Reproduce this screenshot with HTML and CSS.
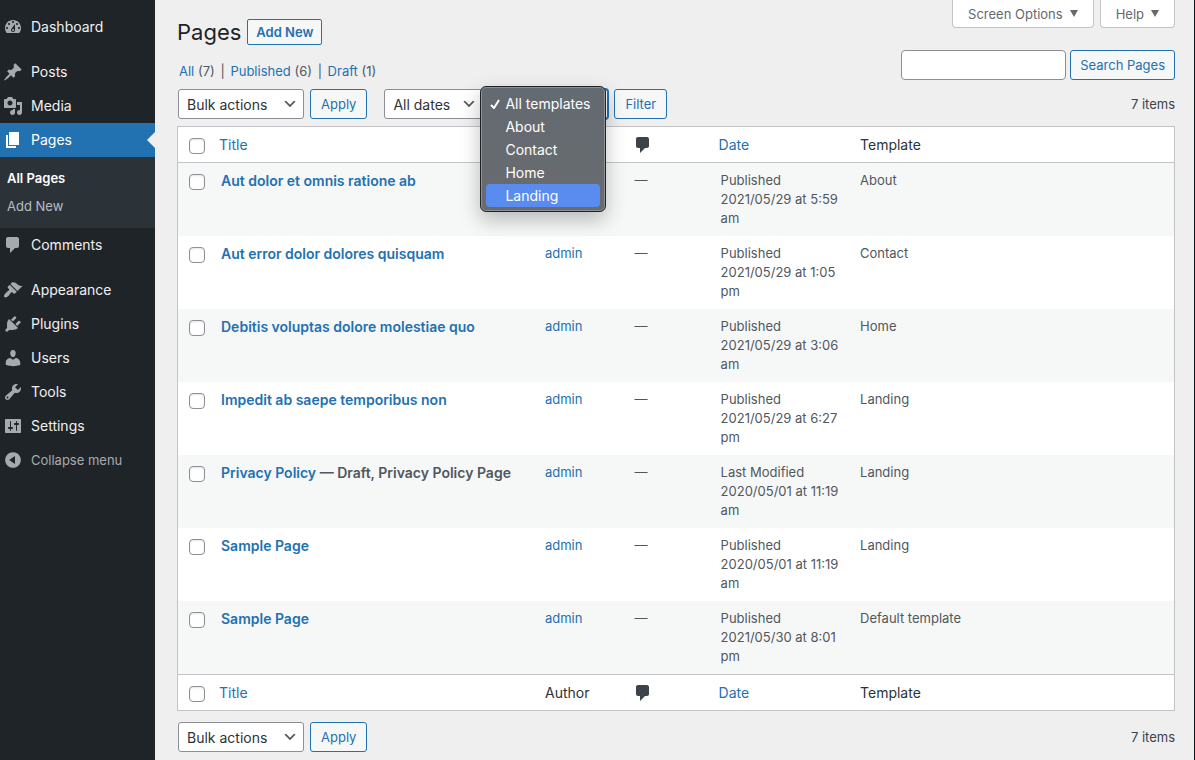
FILE: index.html
```html
<!DOCTYPE html>
<html lang="en">
<head>
  <meta charset="UTF-8" />
  <meta name="viewport" content="width=device-width, initial-scale=1.0"/>
  <title>Pages</title>
  <link rel="stylesheet" href="styles.css">
</head>
<body>
  <nav class="menu" aria-label="Main menu">
    <a class="menu-item" href="#">
      <svg viewBox="0 0 20 20"><path fill-rule="evenodd" d="M3.76 16h12.48c1.1-1.37 1.76-3.11 1.76-5 0-4.42-3.58-8-8-8s-8 3.58-8 8c0 1.89.66 3.63 1.76 5zM10 4c.55 0 1 .45 1 1s-.45 1-1 1-1-.45-1-1 .45-1 1-1zM6 6c.55 0 1 .45 1 1s-.45 1-1 1-1-.45-1-1 .45-1 1-1zm8 0c.55 0 1 .45 1 1s-.45 1-1 1-1-.45-1-1 .45-1 1-1zm-5.37 5.55L12 7v6c0 1.1-.9 2-2 2s-2-.9-2-2c0-.57.24-1.08.63-1.45zM4 10c.55 0 1 .45 1 1s-.45 1-1 1-1-.45-1-1 .45-1 1-1zm12 0c.55 0 1 .45 1 1s-.45 1-1 1-1-.45-1-1 .45-1 1-1zm-5 3c0-.55-.45-1-1-1s-1 .45-1 1 .45 1 1 1 1-.45 1-1z"/></svg>
      Dashboard
    </a>
    <a class="menu-item spaced" href="#">
      <svg viewBox="0 0 20 20"><path d="M10.44 3.02l1.82-1.82 6.36 6.35-1.83 1.82c-1.05-.68-2.48-.57-3.41.36l-.75.75c-.92.93-1.04 2.35-.35 3.41l-1.83 1.82-2.41-2.41-2.8 2.79c-.42.42-3.38 2.71-3.8 2.29s1.86-3.39 2.28-3.81l2.79-2.79L4.1 9.36l1.83-1.82c1.05.69 2.48.57 3.4-.36l.75-.75c.93-.92 1.05-2.35.36-3.41z"/></svg>
      Posts
    </a>
    <a class="menu-item" href="#">
      <svg viewBox="0 0 20 20"><path fill-rule="evenodd" d="M13 11V4c0-.55-.45-1-1-1h-1.67L9 1H5L3.67 3H2c-.55 0-1 .45-1 1v7c0 .55.45 1 1 1h10c.55 0 1-.45 1-1zM7 4.5c1.38 0 2.5 1.12 2.5 2.5S8.38 9.5 7 9.5 4.5 8.38 4.5 7 5.62 4.5 7 4.5zM14 6h5v10.5c0 1.38-1.12 2.5-2.5 2.5S14 17.88 14 16.5s1.12-2.5 2.5-2.5c.17 0 .34.02.5.05V9h-3V6zm-4 8.05V13h2v3.5c0 1.38-1.12 2.5-2.5 2.5S7 17.88 7 16.5 8.12 14 9.5 14c.17 0 .34.02.5.05z"/></svg>
      Media
    </a>
    <a class="menu-item current" href="#">
      <svg viewBox="0 0 20 20"><path d="M6 15V2h10v13H6zm-1 1h8v2H3V5h2v11z"/></svg>
      Pages
    </a>
    <div class="submenu">
      <a class="active" href="#">All Pages</a>
      <a href="#">Add New</a>
    </div>
    <a class="menu-item" href="#">
      <svg viewBox="0 0 20 20"><path d="M5 2h9c1.1 0 2 .9 2 2v7c0 1.1-.9 2-2 2h-2l-5 5v-5H5c-1.1 0-2-.9-2-2V4c0-1.1.9-2 2-2z"/></svg>
      Comments
    </a>
    <a class="menu-item spaced" href="#">
      <svg viewBox="0 0 20 20"><path d="M14.48 11.06L7.41 3.99l1.5-1.5c.5-.56 2.3-.47 3.51.32 1.21.8 1.43 1.28 2.91 2.1 1.18.64 2.45 1.26 4.45.85zm-.71.71L6.7 4.7 4.93 6.47c-.39.39-.39 1.02 0 1.41l1.06 1.06c.39.39.39 1.03 0 1.42-.6.6-1.43 1.11-2.21 1.69-.35.26-.7.53-1.01.84C1.43 14.23.4 16.08 1.4 17.07c.99 1 2.84-.03 4.18-1.36.31-.31.58-.66.85-1.02.57-.78 1.08-1.61 1.69-2.21.39-.39 1.02-.39 1.41 0l1.06 1.06c.39.39 1.02.39 1.41 0z"/></svg>
      Appearance
    </a>
    <a class="menu-item" href="#">
      <svg viewBox="0 0 20 20"><path d="M13.11 4.36L9.87 7.6 8 5.73l3.24-3.24c.35-.34 1.05-.2 1.56.32.52.51.66 1.21.31 1.55zm-8 1.77l.91-1.12 9.01 9.01-1.19.84c-.71.71-2.63 1.16-3.82 1.16H6.14L4.9 17.26c-.59.59-1.54.59-2.12 0-.59-.58-.59-1.53 0-2.12l1.24-1.24v-3.88c0-1.13.4-3.19 1.09-3.89zm7.26 3.97l3.24-3.24c.34-.35 1.04-.21 1.55.31.52.51.66 1.21.31 1.55l-3.24 3.25z"/></svg>
      Plugins
    </a>
    <a class="menu-item" href="#">
      <svg viewBox="0 0 20 20"><path d="M10 9.25c-2.27 0-2.73-3.44-2.73-3.44C7 4.02 7.82 2 9.97 2c2.16 0 2.98 2.02 2.71 3.81 0 0-.41 3.44-2.68 3.44zm0 2.57L12.72 10c2.39 0 4.52 2.33 4.52 4.53v2.49s-3.65 1.13-7.24 1.13c-3.65 0-7.24-1.13-7.24-1.13v-2.49c0-2.25 1.94-4.48 4.47-4.48z"/></svg>
      Users
    </a>
    <a class="menu-item" href="#">
      <svg viewBox="0 0 20 20"><path fill-rule="evenodd" d="M16.68 9.77c-1.34 1.34-3.3 1.67-4.95.99l-5.41 6.52c-.99.99-2.59.99-3.58 0s-.99-2.59 0-3.57l6.52-5.42c-.68-1.65-.35-3.61.99-4.95 1.28-1.28 3.12-1.62 4.72-1.06l-2.89 2.89 2.82 2.82 2.86-2.87c.53 1.58.18 3.39-1.08 4.65zM3.81 16.21c.4.39 1.04.39 1.43 0 .4-.4.4-1.04 0-1.43-.39-.4-1.03-.4-1.43 0-.39.39-.39 1.03 0 1.43z"/></svg>
      Tools
    </a>
    <a class="menu-item" href="#">
      <svg viewBox="0 0 20 20"><path fill-rule="evenodd" d="M18 16V4c0-.55-.45-1-1-1H3c-.55 0-1 .45-1 1v12c0 .55.45 1 1 1h14c.55 0 1-.45 1-1zM8 11h1c.55 0 1 .45 1 1s-.45 1-1 1H8v1.5c0 .28-.22.5-.5.5s-.5-.22-.5-.5V13H6c-.55 0-1-.45-1-1s.45-1 1-1h1V5.5c0-.28.22-.5.5-.5s.5.22.5.5V11zm5-2h-1c-.55 0-1-.45-1-1s.45-1 1-1h1V5.5c0-.28.22-.5.5-.5s.5.22.5.5V7h1c.55 0 1 .45 1 1s-.45 1-1 1h-1v5.5c0 .28-.22.5-.5.5s-.5-.22-.5-.5V9z"/></svg>
      Settings
    </a>
    <button class="menu-item collapse" type="button">
      <svg viewBox="0 0 20 20"><path fill-rule="evenodd" d="M10 2.16c4.33 0 7.84 3.51 7.84 7.84s-3.51 7.84-7.84 7.84S2.16 14.33 2.16 10 5.71 2.16 10 2.16zm2 11.72V6.12L6.18 9.97z"/></svg>
      Collapse menu
    </button>
  </nav>

  <main class="content">
    <header class="top">
      <div class="heading">
        <div class="title-row">
          <h1>Pages</h1>
          <a class="add-new" href="#">Add New</a>
        </div>
        <div class="views">
          <a href="#">All</a> (7)
          <span class="sep">|</span>
          <a href="#">Published</a> (6)
          <span class="sep">|</span>
          <a href="#">Draft</a> (1)
        </div>
      </div>
      <div class="top-right">
        <div class="screen-tabs">
          <button type="button">Screen Options <span class="arrow"></span></button>
          <button type="button">Help <span class="arrow"></span></button>
        </div>
        <div class="search">
          <input type="search" aria-label="Search Pages">
          <button class="button" type="button">Search Pages</button>
        </div>
      </div>
    </header>

    <div class="tablenav">
      <select class="bulk" aria-label="Select bulk action">
        <option>Bulk actions</option>
      </select>
      <button class="button" type="button">Apply</button>
      <select class="dates" aria-label="Filter by date">
        <option>All dates</option>
      </select>
      <div class="template-filter">
        <select class="templates" aria-label="Filter by template">
          <option>All templates</option>
          <option>About</option>
          <option>Contact</option>
          <option>Home</option>
          <option>Landing</option>
        </select>
        <ul class="dropdown" role="listbox" aria-label="Templates">
          <li role="option" aria-selected="true"><svg viewBox="0 0 10 10"><path d="M1 6l3 3 5-8"/></svg>All templates</li>
          <li role="option">About</li>
          <li role="option">Contact</li>
          <li role="option">Home</li>
          <li role="option" class="hover">Landing</li>
        </ul>
      </div>
      <button class="button" type="button">Filter</button>
      <span class="count">7 items</span>
    </div>

    <table class="pages">
      <colgroup>
        <col class="col-check"><col><col class="col-author"><col class="col-comments"><col class="col-date"><col>
      </colgroup>
      <thead>
        <tr>
          <td class="check"><input type="checkbox" aria-label="Select all"></td>
          <th class="sortable"><a href="#">Title</a></th>
          <th>Author</th>
          <th class="comments"><svg viewBox="0 0 20 20" role="img" aria-label="Comments"><path d="M5 2h9c1.1 0 2 .9 2 2v7c0 1.1-.9 2-2 2h-2l-5 5v-5H5c-1.1 0-2-.9-2-2V4c0-1.1.9-2 2-2z"/></svg></th>
          <th class="sortable"><a href="#">Date</a></th>
          <th>Template</th>
        </tr>
      </thead>
      <tbody>
        <tr>
          <td class="check"><input type="checkbox" aria-label="Select Aut dolor et omnis ratione ab"></td>
          <td class="title"><a href="#">Aut dolor et omnis ratione ab</a></td>
          <td><a href="#">admin</a></td>
          <td>—</td>
          <td>Published<br>2021/05/29 at 5:59 am</td>
          <td>About</td>
        </tr>
        <tr>
          <td class="check"><input type="checkbox" aria-label="Select Aut error dolor dolores quisquam"></td>
          <td class="title"><a href="#">Aut error dolor dolores quisquam</a></td>
          <td><a href="#">admin</a></td>
          <td>—</td>
          <td>Published<br>2021/05/29 at 1:05 pm</td>
          <td>Contact</td>
        </tr>
        <tr>
          <td class="check"><input type="checkbox" aria-label="Select Debitis voluptas dolore molestiae quo"></td>
          <td class="title"><a href="#">Debitis voluptas dolore molestiae quo</a></td>
          <td><a href="#">admin</a></td>
          <td>—</td>
          <td>Published<br>2021/05/29 at 3:06 am</td>
          <td>Home</td>
        </tr>
        <tr>
          <td class="check"><input type="checkbox" aria-label="Select Impedit ab saepe temporibus non"></td>
          <td class="title"><a href="#">Impedit ab saepe temporibus non</a></td>
          <td><a href="#">admin</a></td>
          <td>—</td>
          <td>Published<br>2021/05/29 at 6:27 pm</td>
          <td>Landing</td>
        </tr>
        <tr>
          <td class="check"><input type="checkbox" aria-label="Select Privacy Policy"></td>
          <td class="title"><a href="#">Privacy Policy</a> — Draft, Privacy Policy Page</td>
          <td><a href="#">admin</a></td>
          <td>—</td>
          <td>Last Modified<br>2020/05/01 at 11:19 am</td>
          <td>Landing</td>
        </tr>
        <tr>
          <td class="check"><input type="checkbox" aria-label="Select Sample Page"></td>
          <td class="title"><a href="#">Sample Page</a></td>
          <td><a href="#">admin</a></td>
          <td>—</td>
          <td>Published<br>2020/05/01 at 11:19 am</td>
          <td>Landing</td>
        </tr>
        <tr>
          <td class="check"><input type="checkbox" aria-label="Select Sample Page"></td>
          <td class="title"><a href="#">Sample Page</a></td>
          <td><a href="#">admin</a></td>
          <td>—</td>
          <td>Published<br>2021/05/30 at 8:01 pm</td>
          <td>Default template</td>
        </tr>
      </tbody>
      <tfoot>
        <tr>
          <td class="check"><input type="checkbox" aria-label="Select all"></td>
          <th class="sortable"><a href="#">Title</a></th>
          <th>Author</th>
          <th class="comments"><svg viewBox="0 0 20 20" role="img" aria-label="Comments"><path d="M5 2h9c1.1 0 2 .9 2 2v7c0 1.1-.9 2-2 2h-2l-5 5v-5H5c-1.1 0-2-.9-2-2V4c0-1.1.9-2 2-2z"/></svg></th>
          <th class="sortable"><a href="#">Date</a></th>
          <th>Template</th>
        </tr>
      </tfoot>
    </table>

    <div class="tablenav bottom">
      <select class="bulk" aria-label="Select bulk action">
        <option>Bulk actions</option>
      </select>
      <button class="button" type="button">Apply</button>
      <span class="count">7 items</span>
    </div>
  </main>
</body>
</html>
```
FILE: styles.css
```css
* {
  box-sizing: border-box;
}

body {
  margin: 0;
  min-height: 100vh;
  display: flex;
  background: #efefef;
  color: #3c434a;
  font-family: Inter, sans-serif;
  font-size: 13px;
  line-height: 19px;
}

a {
  color: #2271b1;
  text-decoration: none;
}

button,
input,
select {
  font-family: inherit;
  margin: 0;
}

/* Sidebar */
.menu {
  width: 155px;
  flex-shrink: 0;
  padding-top: 10px;
  background: #1f2428;
}

.menu-item {
  display: flex;
  align-items: center;
  gap: 8px;
  width: 100%;
  height: 34px;
  padding: 0 3px;
  color: #f0f0f1;
  font-size: 14px;
  line-height: 18px;
}

.menu-item svg {
  width: 20px;
  height: 20px;
  fill: #a7aaad;
}

.spaced {
  margin-top: 11px;
}

.current {
  position: relative;
  background: #2271b1;
  color: #fff;
}

.current svg {
  fill: #fff;
}

.current::after {
  content: "";
  position: absolute;
  right: 0;
  top: 9px;
  border: 8px solid transparent;
  border-left: none;
  border-right-color: #efefef;
}

.submenu {
  padding: 7px 0 8px;
  background: #2c3338;
}

.submenu a {
  display: block;
  padding: 0 7px;
  line-height: 28px;
  color: #b9bcc0;
}

.submenu .active {
  color: #fff;
  font-weight: 600;
}

.collapse {
  border: none;
  background: none;
  color: #a7aaad;
  font-size: 13px;
}

/* Page header */
.content {
  flex: 1;
  min-width: 0;
  padding: 0 19px 8px 22px;
  border-right: 1px solid #10161d;
}

.top {
  display: flex;
  justify-content: space-between;
}

.heading {
  padding-top: 19px;
}

.title-row {
  display: flex;
  align-items: center;
  gap: 6px;
}

h1 {
  margin: 0;
  color: #1d2327;
  font-size: 22px;
  font-weight: 400;
  line-height: 26px;
}

.add-new {
  padding: 0 8px;
  border: 1px solid #2271b1;
  border-radius: 2px;
  background: #f6f7f7;
  font-weight: 600;
  line-height: 24px;
}

.views {
  margin-top: 17px;
  padding-left: 2px;
  color: #50575e;
}

.sep {
  margin: 0 2px;
}

.screen-tabs {
  display: flex;
  justify-content: flex-end;
  gap: 6px;
}

.screen-tabs button {
  display: flex;
  align-items: center;
  gap: 7px;
  height: 28px;
  padding: 0 15px;
  border: 1px solid #c3c4c7;
  border-top: none;
  border-radius: 0 0 4px 4px;
  background: #fff;
  color: #646970;
  font-size: 13px;
}

.arrow {
  border: 4px solid transparent;
  border-top: 7px solid #646970;
  border-bottom: none;
}

.search {
  display: flex;
  justify-content: flex-end;
  gap: 4px;
  margin-top: 22px;
}

.search input {
  width: 165px;
  height: 30px;
  border: 1px solid #8c8f94;
  border-radius: 4px;
  background: #fff;
}

.button {
  height: 30px;
  padding: 0 10px;
  border: 1px solid #2271b1;
  border-radius: 3px;
  background: #f6f7f7;
  color: #2271b1;
  font-size: 13px;
}

.search .button {
  padding: 0 9px;
}

/* Filters above and below the table */
.tablenav {
  display: flex;
  align-items: center;
  gap: 6px;
  margin: 8px 0 7px;
  padding-left: 1px;
}

.bottom {
  margin: 11px 0 0;
}

select {
  height: 30px;
  padding: 0 24px 0 8px;
  border: 1px solid #8c8f94;
  border-radius: 3px;
  appearance: none;
  background: #fff url("data:image/svg+xml,%3Csvg xmlns='http://www.w3.org/2000/svg' viewBox='0 0 20 20'%3E%3Cpath d='M5 6l5 5 5-5 2 1-7 7-7-7 2-1z' fill='%23555'/%3E%3C/svg%3E") no-repeat right 5px center / 16px 16px;
  color: #2c3338;
  font-size: 14px;
}

.bulk {
  width: 126px;
}

.dates {
  width: 99px;
  margin-left: 11px;
}

.templates {
  width: 119px;
  border-color: #2271b1;
  box-shadow: 0 0 0 1px #2271b1;
}

.template-filter {
  position: relative;
}

.dropdown {
  position: absolute;
  left: -9px;
  top: -3px;
  z-index: 1;
  width: 126px;
  margin: 0;
  padding: 5px 4px 4px;
  border: 1px solid #202326;
  border-radius: 6px;
  background: linear-gradient(#636a71, #696c6f);
  box-shadow: inset 0 0 0 1px #8d9194, 0 8px 20px rgba(0, 0, 0, 0.25);
  color: #fff;
  font-size: 14px;
  line-height: 23px;
  list-style: none;
}

.dropdown li {
  position: relative;
  padding-left: 19px;
  margin: 0 1px;
  border-radius: 4px;
  white-space: nowrap;
}

.dropdown svg {
  position: absolute;
  left: 4px;
  top: 7px;
  width: 10px;
  height: 10px;
  fill: none;
  stroke: #fff;
  stroke-width: 2;
}

.dropdown .hover {
  background: #598cee;
}

.count {
  margin-left: auto;
}

/* Pages table */
.pages {
  width: 100%;
  table-layout: fixed;
  border: 1px solid #c3c4c7;
  border-spacing: 0;
  background: #fff;
  color: #50575e;
}

.col-check {
  width: 33px;
}

.col-author {
  width: 9%;
}

.col-comments {
  width: 86px;
}

.col-date {
  width: 14%;
}

td,
th {
  padding: 8px 10px;
  text-align: left;
  vertical-align: top;
}

th {
  color: #2c3338;
  font-size: 14px;
  font-weight: 400;
}

thead th,
thead td {
  border-bottom: 1px solid #c3c4c7;
}

tfoot th,
tfoot td {
  border-top: 1px solid #c3c4c7;
}

th.sortable,
th.comments {
  padding-left: 8px;
}

th.comments {
  padding-bottom: 7px;
}

.comments svg {
  display: block;
  width: 20px;
  height: 20px;
  fill: #3c434a;
}

tbody tr:nth-child(odd) {
  background: #f6f7f7;
}

.title {
  font-size: 14px;
  font-weight: 600;
}

.check {
  padding: 11px 0 0 11px;
}

.check input {
  display: block;
  width: 16px;
  height: 16px;
  border: 1px solid #8c8f94;
  border-radius: 4px;
  appearance: none;
  background: #fff;
  box-shadow: inset 0 1px 2px rgba(0, 0, 0, 0.1);
}
```
